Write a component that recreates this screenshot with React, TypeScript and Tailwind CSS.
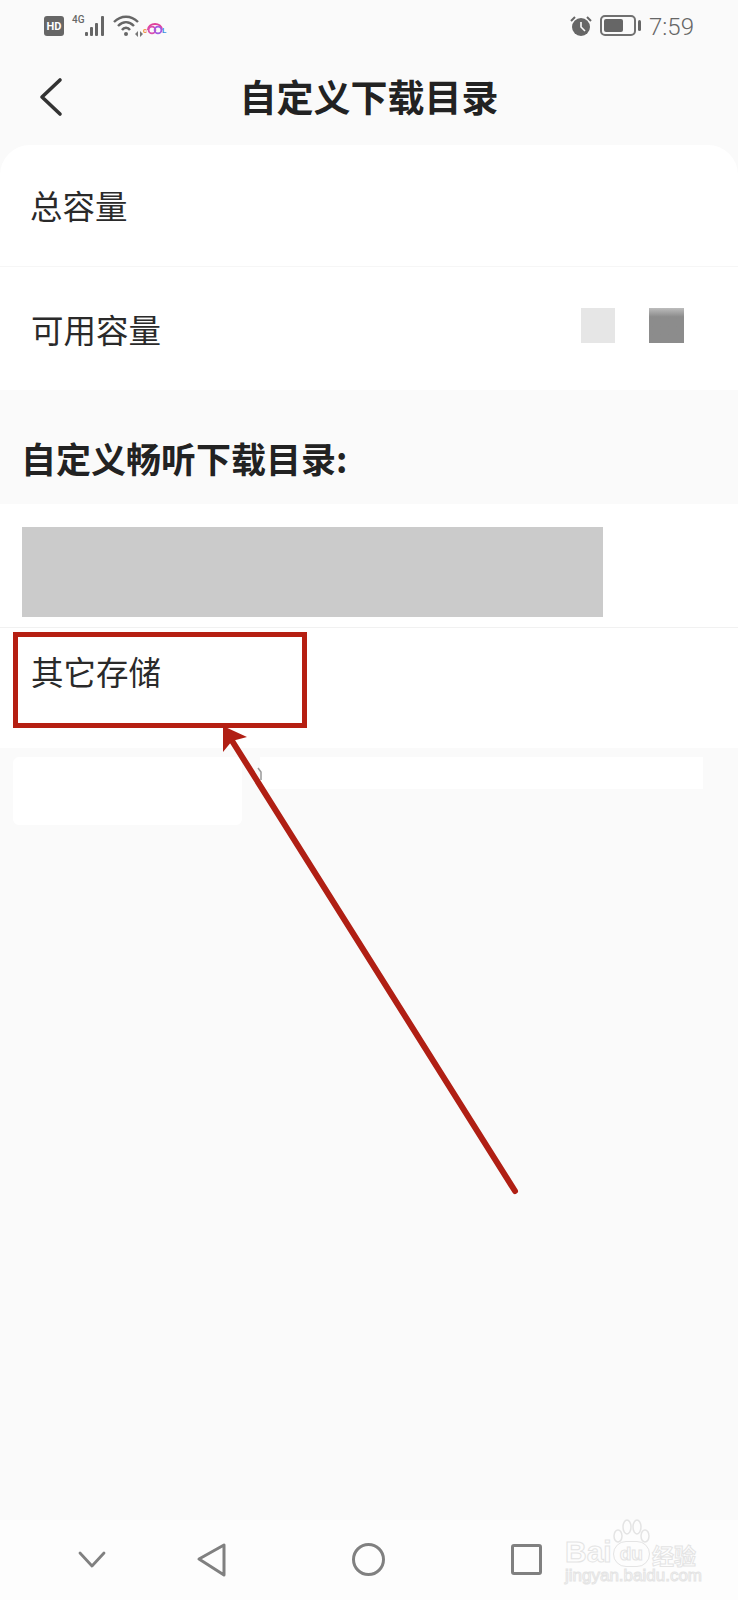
const FONT = "font-['Noto_Sans_CJK_SC','Noto_Sans',sans-serif]";

function StatusBar() {
  return (
    <div className="flex h-[50px] items-start justify-between pl-[44px] pr-[44px] pt-[15px] text-[#666]">
      <div className="flex items-start">
        <div className="mt-px flex h-[20px] w-[20px] items-center justify-center rounded-[3px] bg-[#666] font-['Roboto',sans-serif] text-[11px] leading-none font-bold text-white">
          HD
        </div>
        <div className="ml-[8px] font-['Roboto',sans-serif] text-[10px] leading-[10px] font-medium">4G</div>
        <svg width="22" height="21" viewBox="0 0 22 21" className="mt-px" fill="#666">
          <rect x="0" y="16" width="3" height="4" rx="1" />
          <rect x="5" y="11" width="3" height="9" rx="1" />
          <rect x="10" y="7" width="3" height="13" rx="1" />
          <rect x="16" y="0" width="3" height="20" rx="1" />
        </svg>
        <svg width="32" height="22" viewBox="0 0 32 22" className="ml-[6px]" fill="none" stroke="#666" strokeWidth="2.4">
          <path d="M1 7 C 8 0, 18 0, 25 7" />
          <path d="M5 11 C 10 6, 16 6, 21 11" />
          <path d="M9 15 C 11 12, 15 12, 17 15" />
          <circle cx="13" cy="19" r="2" fill="#666" stroke="none" />
          <path d="M22 19 l3 -3 v6 z M27 16 l3 3 -3 3 z" fill="#777" stroke="none" />
        </svg>
        <svg width="24" height="20" viewBox="0 0 24 20" className="ml-[-2px] mt-[4px]">
          <path d="M5 11 C 5 3, 19 3, 19 11" fill="none" stroke="#e0409a" strokeWidth="2" />
          <circle cx="9" cy="11" r="3.4" fill="none" stroke="#d94fb0" strokeWidth="1.8" />
          <circle cx="15" cy="11" r="3.4" fill="none" stroke="#a45be0" strokeWidth="1.8" />
          <text x="0" y="14" fontSize="8" fontWeight="700" fill="#f08a3c" fontFamily="Roboto, sans-serif">c</text>
          <text x="19" y="14" fontSize="8" fontWeight="700" fill="#3f8fe0" fontFamily="Roboto, sans-serif">L</text>
        </svg>
      </div>
      <div className="flex items-start">
        <svg width="24" height="22" viewBox="0 0 24 22" className="mr-[7px]">
          <circle cx="12" cy="12" r="9" fill="#666" />
          <path d="M12 7 v5 l4 4" fill="none" stroke="#fafafa" strokeWidth="1.6" />
          <path d="M2 6 L6 2 M22 6 L18 2" stroke="#666" strokeWidth="2" />
        </svg>
        <div className="flex h-[21px] w-[36px] items-center rounded-[5px] border-2 border-[#707070] p-[2px]">
          <div className="h-full w-[19px] rounded-[2px] bg-[#666]" />
        </div>
        <div className="ml-[2px] mt-[5px] h-[11px] w-[3px] rounded-full bg-[#666]" />
        <div className="ml-[8px] font-['Roboto',sans-serif] text-[24px] leading-[24px] font-light">7:59</div>
      </div>
    </div>
  );
}

function Header() {
  return (
    <div className="relative flex h-[95px] items-center justify-center pb-[2px]">
      <svg width="24" height="40" viewBox="0 0 24 40" className="absolute left-[39px] top-[27px]" fill="none" stroke="#333" strokeWidth="3.6" strokeLinecap="round" strokeLinejoin="round">
        <path d="M21 3 L3 20 L21 37" />
      </svg>
      <h1 className="text-[37px] leading-none font-bold text-[#222]">自定义下载目录</h1>
    </div>
  );
}

function StorageCard() {
  return (
    <div className="rounded-t-[30px] bg-white text-[32.5px] leading-none text-[#2a2a2a]">
      <div className="flex h-[122px] items-center border-b border-[#f6f6f6] pl-[30px]">总容量</div>
      <div className="flex h-[123px] items-center pl-[31px]">
        <span className="pt-[2px]">可用容量</span>
        <div className="ml-auto mb-[7px] mr-[54px] flex gap-[34px]">
          <div className="h-[35px] w-[34px] bg-[#e6e6e6]" />
          <div className="h-[35px] w-[35px] bg-gradient-to-b from-[#bdbdbd] to-[#8c8c8c] to-[25%]" />
        </div>
      </div>
    </div>
  );
}

function NavBar() {
  return (
    <div className="mt-auto flex h-[80px] items-center bg-[#fdfdfd] pb-[1px] pl-[78px]">
      <svg width="28" height="18" viewBox="0 0 28 18" fill="none" stroke="#808080" strokeWidth="2.8" strokeLinecap="round" strokeLinejoin="round">
        <path d="M2 2 L14 15 L26 2" />
      </svg>
      <svg width="32" height="36" viewBox="0 0 32 36" className="ml-[90px]" fill="none" stroke="#808080" strokeWidth="3" strokeLinejoin="round">
        <path d="M28 3 V33 L3 17 Z" />
      </svg>
      <div className="ml-[124px] h-[33px] w-[33px] rounded-full border-[3px] border-[#808080]" />
      <div className="ml-[126px] h-[31px] w-[31px] rounded-[3px] border-[3px] border-[#808080]" />
    </div>
  );
}

function Watermark() {
  return (
    <div className="absolute left-[565px] top-[1519px] w-[150px] font-['Liberation_Sans',sans-serif] text-transparent [-webkit-text-stroke:1px_#e4e4e4]">
      <svg width="42" height="30" viewBox="0 0 42 30" className="absolute left-[45px] top-0" fill="none" stroke="#e4e4e4" strokeWidth="1.5">
        <ellipse cx="8" cy="17" rx="4" ry="6" />
        <ellipse cx="17" cy="8" rx="4" ry="7" />
        <ellipse cx="27" cy="8" rx="4" ry="7" />
        <ellipse cx="35" cy="17" rx="4" ry="6" />
      </svg>
      <div className="flex items-end pt-[18px] text-[30px] leading-[30px] font-bold">
        <span>Bai</span>
        <span className="ml-[1px] rounded-full border border-[#e4e4e4] px-[6px] text-[19px] leading-[24px]">du</span>
        <span className={`${FONT} ml-[2px] text-[22px] leading-[26px]`}>经验</span>
      </div>
      <div className="mt-[1px] text-[17px] leading-[16px] whitespace-nowrap">jingyan.baidu.com</div>
    </div>
  );
}

export default function App() {
  return (
    <div className={`relative flex h-[1600px] w-[738px] flex-col overflow-hidden bg-[#fafafa] ${FONT}`}>
      <StatusBar />
      <Header />
      <StorageCard />

      <div className="flex h-[114px] items-center pl-[21px] pt-[20px] text-[35px] leading-none font-bold text-[#222]">
        自定义畅听下载目录:
      </div>

      <div className="bg-white text-[32.5px] text-[#2a2a2a]">
        <div className="h-[124px] border-b border-[#f1f1f1] pl-[22px] pt-[23px]">
          <div className="h-[90px] w-[581px] bg-[#cbcbcb]" />
        </div>
        <div className="h-[120px] pl-[31px] pt-[23px] leading-[40px]">其它存储</div>
      </div>

      <div className="mt-[9px] flex items-start pl-[13px]">
        <div className="h-[68px] w-[229px] rounded-[6px] bg-white" />
        <div className="ml-[18px] h-[32px] w-[443px] bg-white" />
      </div>

      <NavBar />
      <Watermark />

      {/* annotation drawn over the screenshot */}
      <div className="absolute left-[13px] top-[632px] h-[96px] w-[294px] border-[5px] border-[#b51f12]" />
      <svg width="738" height="1600" viewBox="0 0 738 1600" className="absolute left-0 top-0">
        <path d="M515 1191 L229 736" stroke="#b01f14" strokeWidth="6" strokeLinecap="round" />
        <path d="M223 726 L223 752 L232 741 L247 737 Z" fill="#b01f14" />
        <path d="M258 768 L261 772 V780" fill="none" stroke="#999" strokeWidth="1.5" />
      </svg>
    </div>
  );
}
